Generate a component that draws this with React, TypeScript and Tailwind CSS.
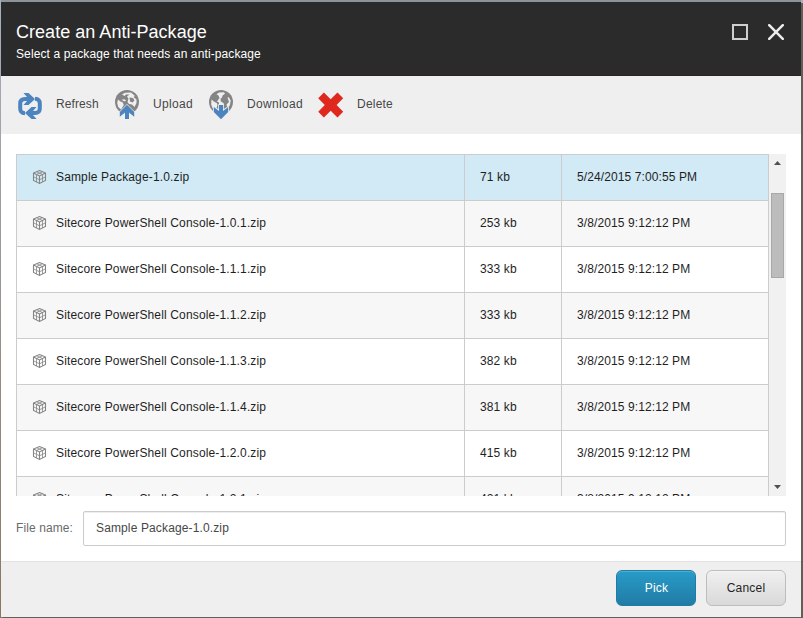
import React from "react";

type Item = { name: string; size: string; date: string };

const items: Item[] = [
  { name: "Sample Package-1.0.zip", size: "71 kb", date: "5/24/2015 7:00:55 PM" },
  { name: "Sitecore PowerShell Console-1.0.1.zip", size: "253 kb", date: "3/8/2015 9:12:12 PM" },
  { name: "Sitecore PowerShell Console-1.1.1.zip", size: "333 kb", date: "3/8/2015 9:12:12 PM" },
  { name: "Sitecore PowerShell Console-1.1.2.zip", size: "333 kb", date: "3/8/2015 9:12:12 PM" },
  { name: "Sitecore PowerShell Console-1.1.3.zip", size: "382 kb", date: "3/8/2015 9:12:12 PM" },
  { name: "Sitecore PowerShell Console-1.1.4.zip", size: "381 kb", date: "3/8/2015 9:12:12 PM" },
  { name: "Sitecore PowerShell Console-1.2.0.zip", size: "415 kb", date: "3/8/2015 9:12:12 PM" },
  { name: "Sitecore PowerShell Console-1.2.1.zip", size: "421 kb", date: "3/8/2015 9:12:12 PM" },
];

function PackageIcon() {
  return (
    <svg className="mb-0.5 h-4 w-4 shrink-0" viewBox="0 0 16 16" fill="none" stroke="#858585" strokeWidth="1.1">
      <path d="M7.5 1.5 L13.5 4 V11.5 L7.5 14.5 L1.5 11.5 V4 Z" />
      <path d="M1.5 4 L7.5 7 L13.5 4 M7.5 7 V14.5" />
      <path d="M4.5 2.7 L10.5 5.5 V13 M10.5 2.7 L4.5 5.5 V13 M1.5 7.8 L7.5 10.8 L13.5 7.8" strokeWidth="0.8" />
    </svg>
  );
}

function RefreshIcon() {
  return (
    <svg className="h-[26px] w-6" viewBox="0 0 24 26">
      <g fill="none" stroke="#4c84bf" strokeWidth="4">
        <path d="M7 20.3 Q2.2 20 2.2 15.5 V10.5 Q2.2 6 7 6 H12" />
        <path d="M17 5.7 Q21.8 6 21.8 10.5 V15.5 Q21.8 20 17 20 H12" />
      </g>
      <path d="M5.5 0 H10.5 L17 6 L10.5 12 H5.5 L9 8 V4 Z" fill="#4c84bf" />
      <path d="M18.5 26 H13.5 L7 20 L13.5 14 H18.5 L15 18 V22 Z" fill="#4c84bf" />
    </svg>
  );
}

function UploadGlobeIcon() {
  return (
    <svg className="h-[30px] w-6" viewBox="0 0 24 30">
      <circle cx="12" cy="12" r="12" fill="#858585" />
      <path d="M3 9.5 L5.5 11.5 L7.8 12.5 L8.8 15 L6 19.5 L3.2 17 L2.2 13 Z" fill="#efefef" />
      <path d="M7 4.5 L10 2.8 L16 2.5 L20 6 L18.5 7 L21.5 9.5 L21.5 13 L19.5 17 L17 14.5 L14 14 L12.5 12 L13.5 8.5 L12 6.5 L14.5 4.5 L11 4.5 L9.5 6 Z" fill="#efefef" />
      <path d="M14.5 7.5 L18 8 L19.5 10.5 L17.5 12.5 L15 11.5 Z" fill="#858585" />
      <path d="M6.5 9.8 L9.5 9.2 L11.2 11 L9 11.2 Z" fill="#efefef" />
      <path d="M12 14 L20 22 V27.3 L14.8 23.3 V30 H9.2 V23.3 L4 27.3 V22 Z" fill="#efefef" />
      <path d="M12 14.8 L19.2 22 V26.7 L14 22.5 V29 H10 V22.5 L4.8 26.7 V22 Z" fill="#4c84bf" />
    </svg>
  );
}

function DownloadGlobeIcon() {
  return (
    <svg className="h-[30px] w-6" viewBox="0 0 24 30">
      <circle cx="12" cy="12" r="12" fill="#858585" />
      <path d="M2.5 9.5 L5.5 12 L7.8 13 L8.5 15 L7.3 19 L4 19 L2.2 14.5 Z" fill="#efefef" />
      <path d="M7.5 4.2 L10 2.5 L15 2.3 L16 3.8 L13.5 5.5 L13 7.5 L11.5 8.8 L11.8 11.5 L14.5 13 L15.2 15.5 L9.8 15.5 L10 12.5 L8 11.5 L10.5 8 L9.5 5.5 Z" fill="#efefef" />
      <path d="M18.5 7.5 L19.8 7.2 L21.7 10.5 L20.8 15.5 L18.5 17.5 L17.5 14.5 L20 12 Z" fill="#efefef" />
      <path d="M9.2 14.2 H14.8 V19 L20 15.8 V22 L12 30 L4 22 V15.8 L9.2 19 Z" fill="#efefef" />
      <path d="M10 15 H14 V21 L19.2 17 V22 L12 29.3 L4.8 22 V17 L10 21 Z" fill="#4c84bf" />
    </svg>
  );
}

function DeleteIcon() {
  return (
    <svg className="h-[26px] w-[26px]" viewBox="0 0 26 26">
      <path
        d="M5.9 0.6 L12.7 7.2 L19.5 0.6 L25.2 6.3 L18.6 13 L25.2 19.7 L19.5 25.4 L12.7 18.8 L5.9 25.4 L0.2 19.7 L6.8 13 L0.2 6.3 Z"
        fill="#df291f"
      />
    </svg>
  );
}

export default function App() {
  return (
    <div className="flex h-[618px] w-[803px] bg-gradient-to-b from-[#a8b0bf] to-[#8b7560] pt-0.5 pr-0.5 pb-px pl-px font-['Liberation_Sans',Arial,sans-serif] text-[12px] leading-4 text-[#1f1f1f]">
      <div className="flex w-[800px] flex-col bg-white shadow-[2px_1px_0_#625e58,0_-2px_0_#8e929b]">
        <header className="flex h-[74px] justify-between border-b border-[#2d2229] bg-[#2b2b2b] pr-[17px] pl-[15px] text-white">
          <div className="pt-[18px]">
            <h1 className="text-[18px] leading-6 tracking-[0.03px]">Create an Anti-Package</h1>
            <p className="mt-0.5 leading-4 tracking-[0.11px]">Select a package that needs an anti-package</p>
          </div>
          <div className="flex gap-5 pt-[22px]">
            <div className="h-4 w-4 border-2 border-[#cfcfcf]" />
            <svg className="h-4 w-4" viewBox="0 0 16 16" stroke="#ececec" strokeWidth="2.5" strokeLinecap="round">
              <path d="M1.2 1.2 L14.8 14.8 M14.8 1.2 L1.2 14.8" />
            </svg>
          </div>
        </header>

        <div className="flex h-[58px] shrink-0 bg-[#efefef] pl-[17px] text-[#474747]">
          <div className="flex w-[96px]">
            <div className="w-[38px] pt-[17px]"><RefreshIcon /></div>
            <span className="pt-5 tracking-[0.1px]">Refresh</span>
          </div>
          <div className="flex w-[94px]">
            <div className="w-[39px] pt-3.5 pl-px"><UploadGlobeIcon /></div>
            <span className="pt-5 tracking-[0.32px]">Upload</span>
          </div>
          <div className="flex w-[110px]">
            <div className="w-[39px] pt-3.5 pl-px"><DownloadGlobeIcon /></div>
            <span className="pt-5 tracking-[0.32px]">Download</span>
          </div>
          <div className="flex">
            <div className="w-[39px] pt-4"><DeleteIcon /></div>
            <span className="pt-5 tracking-[0.22px]">Delete</span>
          </div>
        </div>

        <main className="flex h-[427px] shrink-0 flex-col pt-5 pr-[15px] pl-[15px]">
          <div className="flex h-[342px] shrink-0 overflow-hidden">
            <div className="w-[753px] border-t border-l border-[#cccccc]">
              {items.map((item, i) => (
                <div
                  key={item.name}
                  className={`flex h-[46px] border-b border-[#cccccc] leading-[45px] ${
                    i === 0 ? "bg-[#d1eaf5]" : i % 2 === 1 ? "bg-[#f7f7f7]" : "bg-white"
                  }`}
                >
                  <div className="flex w-[448px] items-center gap-2 border-r border-[#cccccc] pl-[15px]">
                    <PackageIcon />
                    <span className="tracking-[0.145px]">{item.name}</span>
                  </div>
                  <div className="w-[97px] border-r border-[#cccccc] pl-[15px] tracking-[0.12px]">{item.size}</div>
                  <div className="w-[207px] border-r border-[#cccccc] pl-[15px] tracking-[0.1px]">{item.date}</div>
                </div>
              ))}
            </div>
            <div className="flex w-[17px] flex-col items-center bg-[#f1f1f1]">
              <svg className="h-[39px] w-[17px]" viewBox="0 0 17 39">
                <path d="M5 11 L8.5 7 L12 11 Z" fill="#505050" />
              </svg>
              <div className="h-[85px] w-[13px] border border-[#a8a8a8] bg-[#bcbcbc]" />
              <svg className="mt-auto h-[17px] w-[17px]" viewBox="0 0 17 17">
                <path d="M5 6 H12 L8.5 10 Z" fill="#505050" />
              </svg>
            </div>
          </div>
          <div className="mt-[15px] flex h-[35px] shrink-0 leading-[33px] text-[#474747]">
            <label className="w-[67px] pt-px tracking-[0.1px] text-[#6a6a6a]">File name:</label>
            <div className="flex-1 rounded-[2px] border border-[#cccccc] pl-3 tracking-[0.13px] shadow-[inset_0_1px_1px_rgba(0,0,0,0.075)]">
              Sample Package-1.0.zip
            </div>
          </div>
        </main>

        <footer className="flex flex-1 justify-end gap-2.5 border-t border-[#e3e3e3] bg-[#efefef] pt-2 pr-[15px]">
          <button className="h-9 w-20 rounded-md border border-[#217ca5] bg-gradient-to-b from-[#289bc8] to-[#217ca5] pl-px tracking-[0.15px] text-white shadow-[inset_0_1px_0_rgba(255,255,255,0.2)]">
            Pick
          </button>
          <button className="h-9 w-20 rounded-md border border-[#bdbdbd] bg-gradient-to-b from-[#f0f0f0] to-[#d9d9d9] tracking-[0.2px] shadow-[inset_0_1px_0_rgba(255,255,255,0.3)]">
            Cancel
          </button>
        </footer>
      </div>
    </div>
  );
}
